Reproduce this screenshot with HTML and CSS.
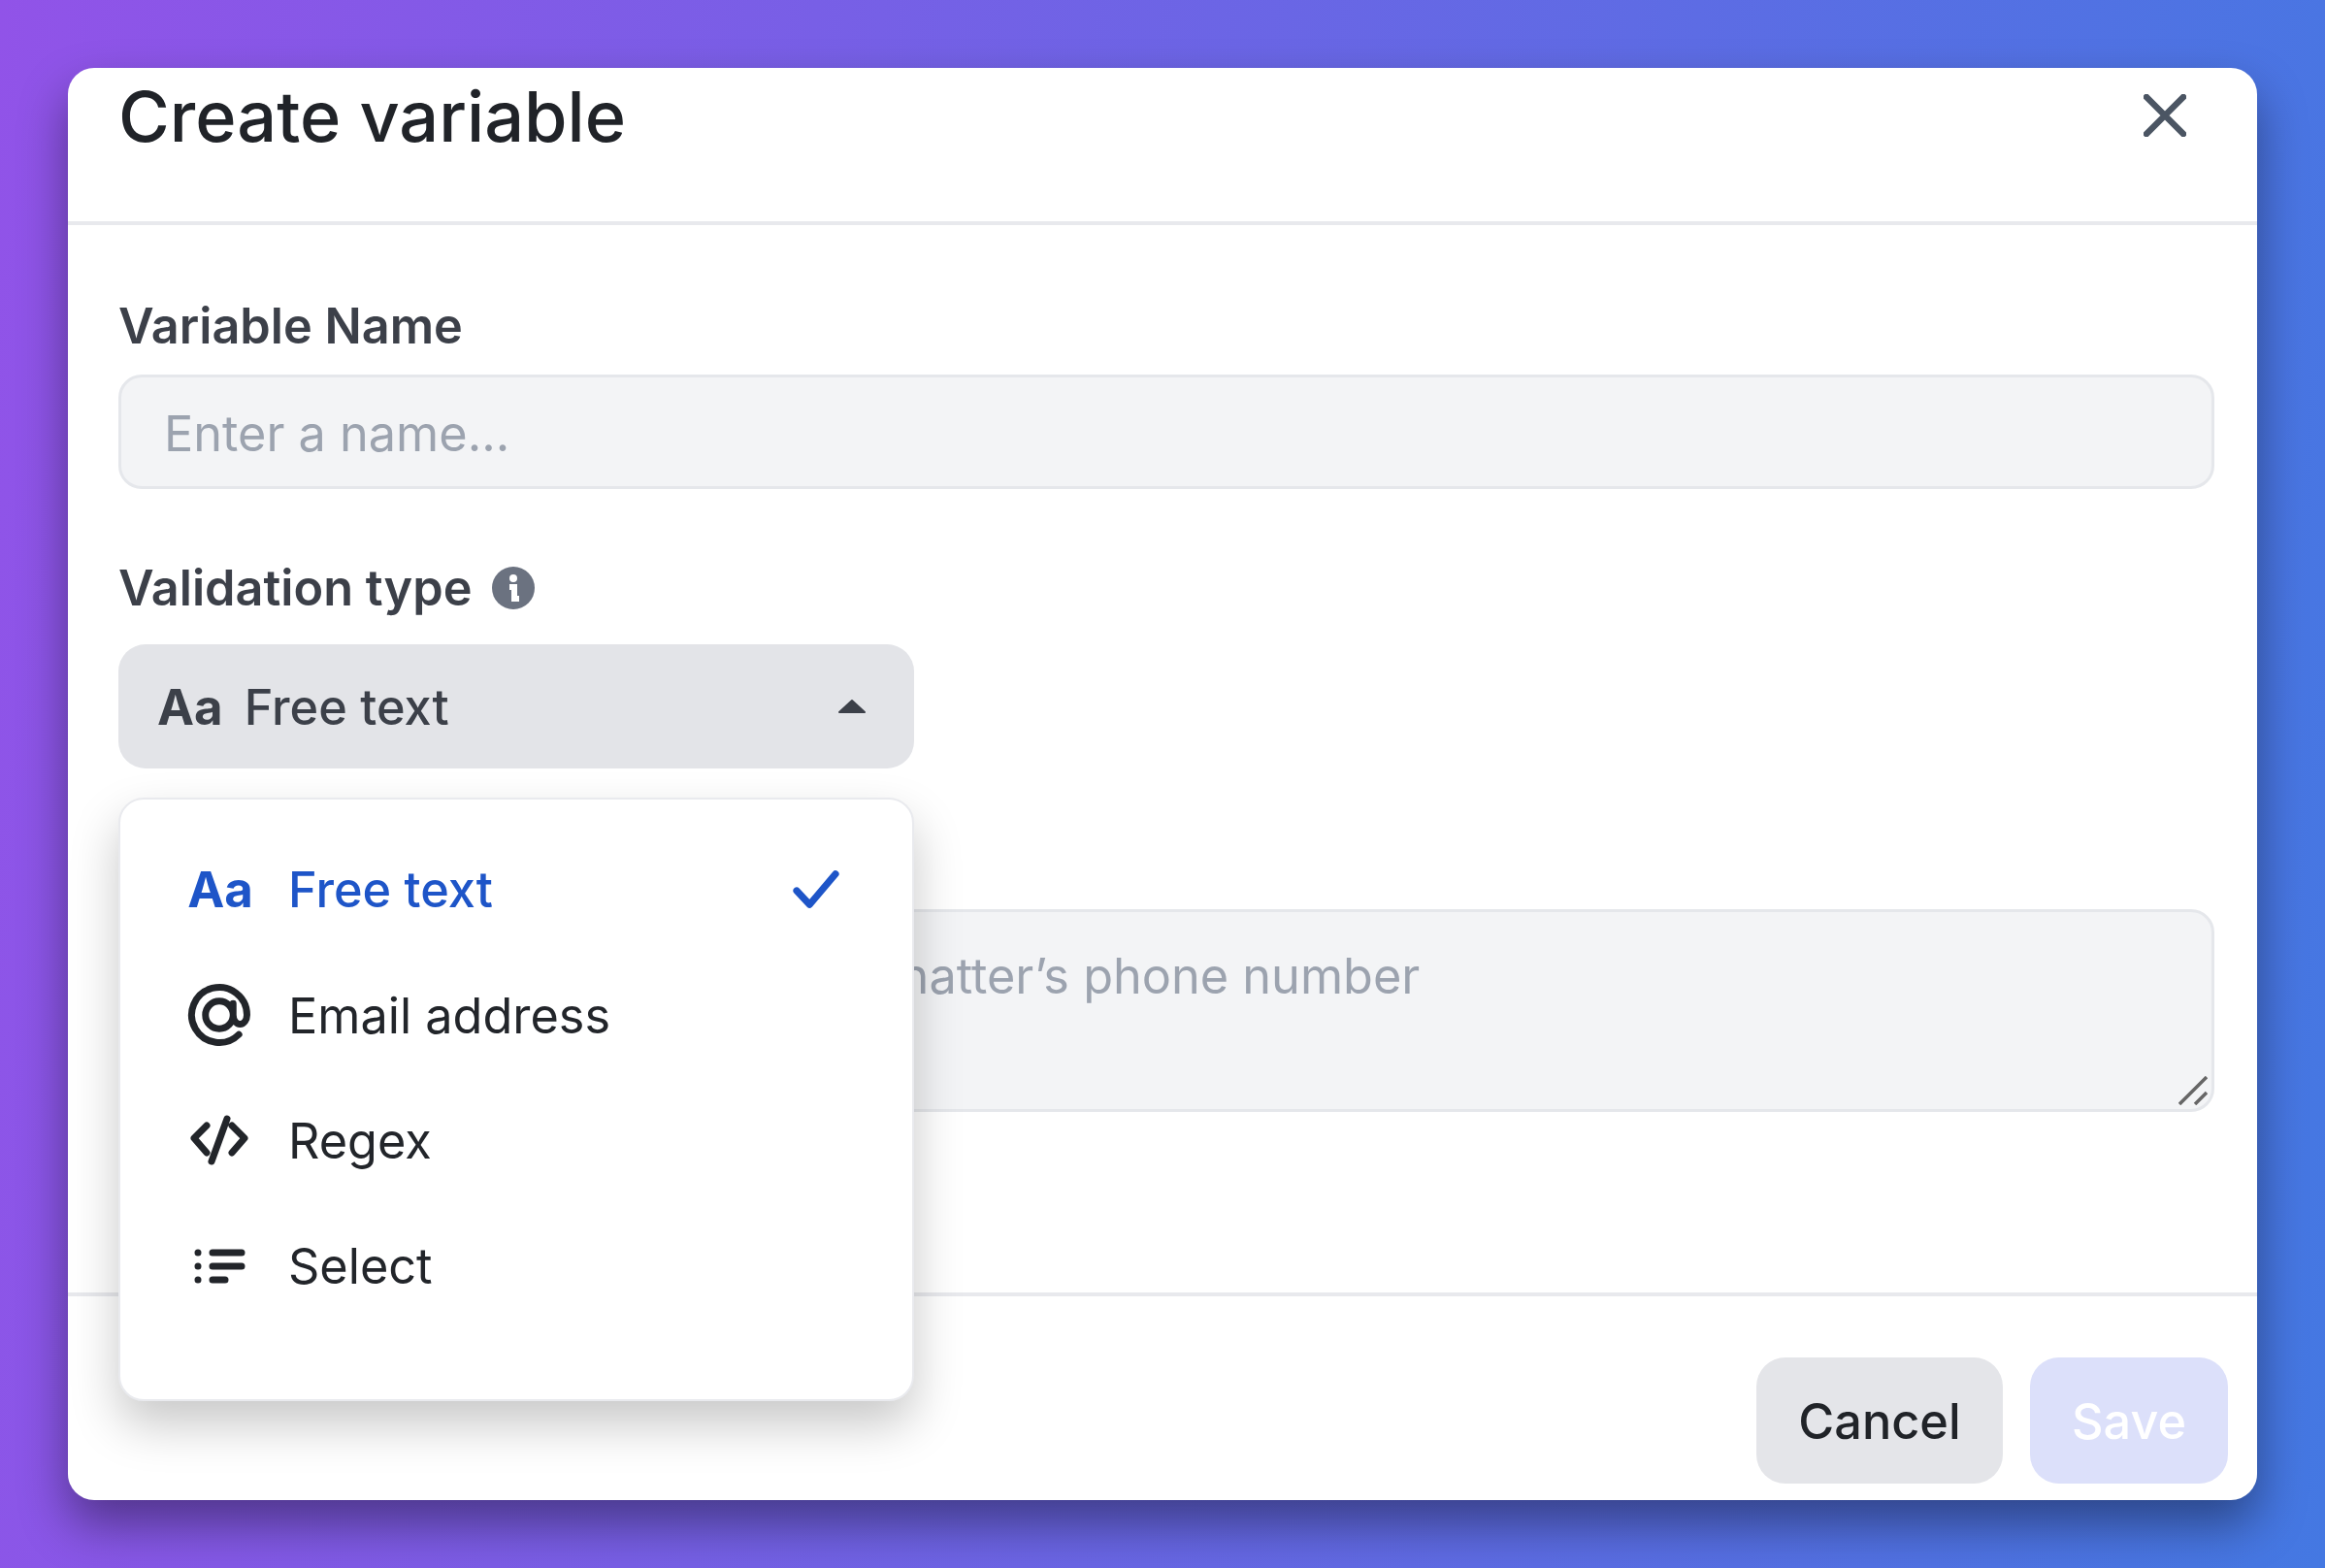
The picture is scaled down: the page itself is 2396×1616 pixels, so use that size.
FILE: index.html
```html
<!DOCTYPE html>
<html lang="en">
<head>
  <meta charset="UTF-8">
  <title>Create variable</title>
  <link rel="stylesheet" href="styles.css">
</head>
<body>
  <div class="modal">
    <header class="modal-header">
      <h1>Create variable</h1>
      <button class="close-btn" type="button" aria-label="Close">
        <svg viewBox="0 0 44 44" width="44" height="44"><path d="M3 3 41 41M41 3 3 41"/></svg>
      </button>
    </header>

    <main class="modal-body">
      <div class="field">
        <label class="field-label" for="varName">Variable Name</label>
        <input class="text-input" type="text" id="varName" placeholder="Enter a name...">
      </div>

      <div class="field field-type">
        <div class="field-label">
          Validation type
          <svg class="info-icon" viewBox="0 0 44 44" width="44" height="44">
            <circle cx="22" cy="22" r="22"/>
            <circle class="info-mark" cx="22" cy="12" r="4"/>
            <path class="info-stem" d="M18 21h5v12h5"/>
          </svg>
        </div>
        <div class="select-wrap">
          <div class="select-btn">
            <span class="aa">Aa</span>
            <span class="select-value">Free text</span>
            <svg class="caret" viewBox="0 0 30 16" width="30" height="16"><path d="M15 2 28 14H2Z"/></svg>
          </div>

          <ul class="menu">
            <li class="menu-item selected">
              <span class="menu-icon"><span class="aa">Aa</span></span>
              <span class="menu-text">Free text</span>
              <svg class="check" viewBox="0 0 50 42" width="48" height="40"><path d="M4 22 18 37 46 4"/></svg>
            </li>
            <li class="menu-item">
              <span class="menu-icon">
                <svg viewBox="0 0 24 24" width="76" height="76"><path class="at" d="M16.5 12a4.5 4.5 0 1 1-9 0 4.5 4.5 0 0 1 9 0Zm0 0c0 1.657 1.007 3 2.25 3S21 13.657 21 12a9 9 0 1 0-2.636 6.364M16.5 12V8.25"/></svg>
              </span>
              <span class="menu-text">Email address</span>
            </li>
            <li class="menu-item">
              <span class="menu-icon">
                <svg viewBox="0 0 64 64" width="64" height="64"><path d="M19 17 6 30 19 45M45 17 58 30 45 45M40 10 24 54"/></svg>
              </span>
              <span class="menu-text">Regex</span>
            </li>
            <li class="menu-item">
              <span class="menu-icon">
                <svg viewBox="0 0 64 64" width="64" height="64"><path d="M25 18H55M25 32H55M25 46H38M10 18h.01M10 32h.01M10 46h.01"/></svg>
              </span>
              <span class="menu-text">Select</span>
            </li>
          </ul>
        </div>
      </div>

      <div class="field field-desc">
        <div class="textarea-wrap">
          <textarea class="text-area" aria-label="Description" placeholder="Describe this variable, e.g. the chatter’s phone number"></textarea>
          <svg class="resize-grip" viewBox="0 0 30 30" width="30" height="30"><path d="M1 29 29 1M17 29 29 17"/></svg>
        </div>
      </div>
    </main>

    <footer class="modal-footer">
      <button class="btn btn-cancel" type="button">Cancel</button>
      <button class="btn btn-save" type="button">Save</button>
    </footer>
  </div>
</body>
</html>
```

FILE: styles.css
```css
* {
  margin: 0;
  padding: 0;
  box-sizing: border-box;
}

body {
  font-family: Inter, 'Noto Sans', sans-serif;
  width: 2396px;
  height: 1616px;
  padding: 70px;
  overflow: hidden;
  background: linear-gradient(97deg, #9153e8, #4478e2);
}

.modal {
  height: 1476px;
  display: flex;
  flex-direction: column;
  background: #fff;
  border-radius: 27px;
  box-shadow: 0 25px 50px rgba(0, 0, 0, 0.4);
}

.modal-header {
  height: 162px;
  flex-shrink: 0;
  display: flex;
  justify-content: space-between;
  padding: 8px 73px 0 52px;
  border-bottom: 4px solid #e8e9ed;
}

h1 {
  font-size: 72px;
  font-weight: 500;
  line-height: 84px;
  color: #202328;
}

.close-btn {
  width: 44px;
  height: 44px;
  margin-top: 19px;
  border: none;
  background: none;
}

.close-btn svg {
  display: block;
  fill: none;
  stroke: #4b5563;
  stroke-width: 6.5;
  stroke-linecap: round;
}

.modal-body {
  flex: 1;
  padding: 74px 44px 0 52px;
}

.field-label {
  display: block;
  height: 60px;
  font-size: 50.4px;
  font-weight: 600;
  line-height: 60px;
  color: #3c4049;
}

.text-input {
  display: block;
  width: 100%;
  height: 118px;
  margin-top: 20px;
  padding: 2px 44px 0;
  font-family: inherit;
  font-size: 50.4px;
  background: #f3f4f6;
  border: 3px solid #e5e7eb;
  border-radius: 24px;
  outline: none;
}

.text-input::placeholder,
.text-area::placeholder {
  color: #9ca3af;
  opacity: 1;
}

.field-type {
  margin-top: 72px;
}

.field-type .field-label {
  display: flex;
  align-items: center;
  gap: 21px;
}

.info-icon {
  fill: #6b7280;
}

.info-mark {
  fill: #fff;
}

.info-stem {
  fill: none;
  stroke: #fff;
  stroke-width: 6;
}

.select-wrap {
  position: relative;
  width: 820px;
  margin-top: 28px;
}

.select-btn {
  height: 128px;
  display: flex;
  align-items: center;
  padding: 0 49px 0 40px;
  font-size: 50.4px;
  font-weight: 500;
  color: #3c4049;
  background: #e3e4e8;
  border-radius: 28px;
}

.aa {
  font-size: 51px;
  font-weight: 700;
}

.select-value {
  margin-left: 22px;
}

.caret {
  margin-left: auto;
  fill: #3c4049;
  stroke: #3c4049;
  stroke-width: 2;
  stroke-linejoin: round;
}

.menu {
  position: absolute;
  top: 158px;
  left: 0;
  z-index: 2;
  width: 820px;
  height: 622px;
  padding: 28px 75px 0 71px;
  list-style: none;
  background: #fff;
  border: 2px solid #e9eaee;
  border-radius: 26px;
  box-shadow: 0 24px 50px rgba(0, 0, 0, 0.22);
}

.menu-item {
  height: 129.4px;
  display: flex;
  align-items: center;
  font-size: 50.4px;
  color: #22252a;
}

.menu-icon {
  width: 64px;
  height: 64px;
  flex-shrink: 0;
  display: flex;
  align-items: center;
  justify-content: center;
  white-space: nowrap;
}

.menu-icon svg {
  flex-shrink: 0;
  margin-left: -3px;
  fill: none;
  stroke: #22252a;
  stroke-width: 7;
  stroke-linecap: round;
  stroke-linejoin: round;
}

.menu-icon .at {
  stroke-width: 2.2;
}

.menu-text {
  margin-left: 38px;
}

.selected {
  color: #1e55c8;
  font-weight: 500;
}

.check {
  margin-left: auto;
  fill: none;
  stroke: #1e55c8;
  stroke-width: 7.5;
  stroke-linecap: round;
  stroke-linejoin: round;
}

.field-desc {
  margin-top: 145px;
}

.textarea-wrap {
  position: relative;
}

.text-area {
  display: block;
  width: 100%;
  height: 209px;
  padding: 36px 36px;
  font-family: inherit;
  font-size: 50.4px;
  line-height: 60px;
  background: #f3f4f6;
  border: 3px solid #e5e7eb;
  border-radius: 24px;
  outline: none;
  resize: none;
}

.resize-grip {
  position: absolute;
  right: 7px;
  bottom: 7px;
  fill: none;
  stroke: #666;
  stroke-width: 3.5;
}

.modal-footer {
  height: 214px;
  flex-shrink: 0;
  display: flex;
  justify-content: flex-end;
  gap: 28px;
  padding: 63px 30px 0 0;
  border-top: 4px solid #e8e9ed;
}

.btn {
  height: 130px;
  font-family: inherit;
  font-size: 50.4px;
  font-weight: 500;
  border: none;
  border-radius: 30px;
}

.btn-cancel {
  width: 254px;
  color: #202328;
  background: #e4e5e9;
}

.btn-save {
  width: 204px;
  color: #fff;
  background: #dce0fa;
}
```
